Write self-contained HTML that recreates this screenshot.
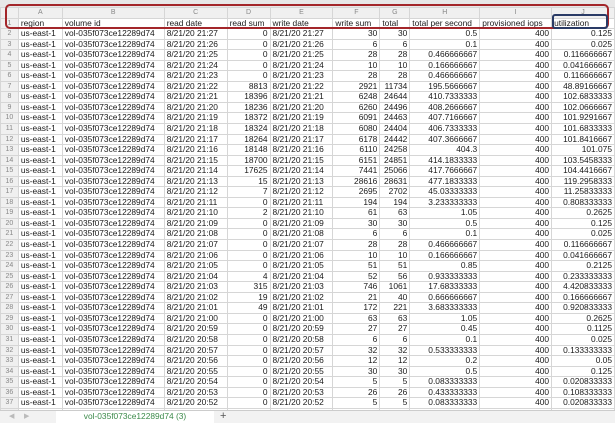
<!DOCTYPE html>
<html><head><meta charset="utf-8"><style>
body{margin:0;width:615px;height:422px;overflow:hidden;background:#fff;font-family:"Liberation Sans",sans-serif;position:relative}
#top{position:absolute;left:0;top:0;width:615px;height:7px;background:#e8e8e8}
#grid{position:absolute;left:0;top:7px;width:615px;height:403px;overflow:hidden}
table{border-collapse:collapse;table-layout:fixed;font-size:8.4px;color:#1a1a1a}
td{border:1px solid #d6d6d6;height:9.55px;padding:0 2px;white-space:nowrap;overflow:hidden;line-height:9.55px}
tr.h td{background:#f0f0f0;color:#888;text-align:center;font-size:7px;height:9px}
td.n{background:#f0f0f0;color:#888;text-align:center;padding:0;font-size:7px}
td.r{text-align:right}
#tabs{position:absolute;left:0;top:410px;width:615px;height:12px;background:#f2f2f2;border-top:1px solid #ccc}
#tab{position:absolute;left:56px;top:0;width:158px;height:12px;background:#fff;color:#3c8a4a;font-size:8.4px;line-height:11px;text-align:center}
.box1{position:absolute;left:5px;top:4px;width:604px;height:25px;border:2px solid #a3262a;border-radius:5px;box-sizing:border-box}
.box2{position:absolute;left:552px;top:14px;width:56px;height:15px;border:2px solid #2a3b66;border-radius:3px;box-sizing:border-box}
</style></head><body>
<div id="top"></div>
<div id="grid"><table>
<colgroup><col style="width:18px"><col style="width:44px"><col style="width:102px"><col style="width:63px"><col style="width:43px"><col style="width:63px"><col style="width:47px"><col style="width:30px"><col style="width:70px"><col style="width:72px"><col style="width:63px"></colgroup>
<tr class="h"><td></td><td>A</td><td>B</td><td>C</td><td>D</td><td>E</td><td>F</td><td>G</td><td>H</td><td>I</td><td>J</td></tr>
<tr><td class="n">1</td><td>region</td><td>volume id</td><td>read date</td><td>read sum</td><td>write date</td><td>write sum</td><td>total</td><td>total per second</td><td>provisioned iops</td><td>utilization</td></tr>
<tr><td class="n">2</td><td>us-east-1</td><td>vol-035f073ce12289d74</td><td>8/21/20 21:27</td><td class="r">0</td><td>8/21/20 21:27</td><td class="r">30</td><td class="r">30</td><td class="r">0.5</td><td class="r">400</td><td class="r">0.125</td></tr>
<tr><td class="n">3</td><td>us-east-1</td><td>vol-035f073ce12289d74</td><td>8/21/20 21:26</td><td class="r">0</td><td>8/21/20 21:26</td><td class="r">6</td><td class="r">6</td><td class="r">0.1</td><td class="r">400</td><td class="r">0.025</td></tr>
<tr><td class="n">4</td><td>us-east-1</td><td>vol-035f073ce12289d74</td><td>8/21/20 21:25</td><td class="r">0</td><td>8/21/20 21:25</td><td class="r">28</td><td class="r">28</td><td class="r">0.466666667</td><td class="r">400</td><td class="r">0.116666667</td></tr>
<tr><td class="n">5</td><td>us-east-1</td><td>vol-035f073ce12289d74</td><td>8/21/20 21:24</td><td class="r">0</td><td>8/21/20 21:24</td><td class="r">10</td><td class="r">10</td><td class="r">0.166666667</td><td class="r">400</td><td class="r">0.041666667</td></tr>
<tr><td class="n">6</td><td>us-east-1</td><td>vol-035f073ce12289d74</td><td>8/21/20 21:23</td><td class="r">0</td><td>8/21/20 21:23</td><td class="r">28</td><td class="r">28</td><td class="r">0.466666667</td><td class="r">400</td><td class="r">0.116666667</td></tr>
<tr><td class="n">7</td><td>us-east-1</td><td>vol-035f073ce12289d74</td><td>8/21/20 21:22</td><td class="r">8813</td><td>8/21/20 21:22</td><td class="r">2921</td><td class="r">11734</td><td class="r">195.5666667</td><td class="r">400</td><td class="r">48.89166667</td></tr>
<tr><td class="n">8</td><td>us-east-1</td><td>vol-035f073ce12289d74</td><td>8/21/20 21:21</td><td class="r">18396</td><td>8/21/20 21:21</td><td class="r">6248</td><td class="r">24644</td><td class="r">410.7333333</td><td class="r">400</td><td class="r">102.6833333</td></tr>
<tr><td class="n">9</td><td>us-east-1</td><td>vol-035f073ce12289d74</td><td>8/21/20 21:20</td><td class="r">18236</td><td>8/21/20 21:20</td><td class="r">6260</td><td class="r">24496</td><td class="r">408.2666667</td><td class="r">400</td><td class="r">102.0666667</td></tr>
<tr><td class="n">10</td><td>us-east-1</td><td>vol-035f073ce12289d74</td><td>8/21/20 21:19</td><td class="r">18372</td><td>8/21/20 21:19</td><td class="r">6091</td><td class="r">24463</td><td class="r">407.7166667</td><td class="r">400</td><td class="r">101.9291667</td></tr>
<tr><td class="n">11</td><td>us-east-1</td><td>vol-035f073ce12289d74</td><td>8/21/20 21:18</td><td class="r">18324</td><td>8/21/20 21:18</td><td class="r">6080</td><td class="r">24404</td><td class="r">406.7333333</td><td class="r">400</td><td class="r">101.6833333</td></tr>
<tr><td class="n">12</td><td>us-east-1</td><td>vol-035f073ce12289d74</td><td>8/21/20 21:17</td><td class="r">18264</td><td>8/21/20 21:17</td><td class="r">6178</td><td class="r">24442</td><td class="r">407.3666667</td><td class="r">400</td><td class="r">101.8416667</td></tr>
<tr><td class="n">13</td><td>us-east-1</td><td>vol-035f073ce12289d74</td><td>8/21/20 21:16</td><td class="r">18148</td><td>8/21/20 21:16</td><td class="r">6110</td><td class="r">24258</td><td class="r">404.3</td><td class="r">400</td><td class="r">101.075</td></tr>
<tr><td class="n">14</td><td>us-east-1</td><td>vol-035f073ce12289d74</td><td>8/21/20 21:15</td><td class="r">18700</td><td>8/21/20 21:15</td><td class="r">6151</td><td class="r">24851</td><td class="r">414.1833333</td><td class="r">400</td><td class="r">103.5458333</td></tr>
<tr><td class="n">15</td><td>us-east-1</td><td>vol-035f073ce12289d74</td><td>8/21/20 21:14</td><td class="r">17625</td><td>8/21/20 21:14</td><td class="r">7441</td><td class="r">25066</td><td class="r">417.7666667</td><td class="r">400</td><td class="r">104.4416667</td></tr>
<tr><td class="n">16</td><td>us-east-1</td><td>vol-035f073ce12289d74</td><td>8/21/20 21:13</td><td class="r">15</td><td>8/21/20 21:13</td><td class="r">28616</td><td class="r">28631</td><td class="r">477.1833333</td><td class="r">400</td><td class="r">119.2958333</td></tr>
<tr><td class="n">17</td><td>us-east-1</td><td>vol-035f073ce12289d74</td><td>8/21/20 21:12</td><td class="r">7</td><td>8/21/20 21:12</td><td class="r">2695</td><td class="r">2702</td><td class="r">45.03333333</td><td class="r">400</td><td class="r">11.25833333</td></tr>
<tr><td class="n">18</td><td>us-east-1</td><td>vol-035f073ce12289d74</td><td>8/21/20 21:11</td><td class="r">0</td><td>8/21/20 21:11</td><td class="r">194</td><td class="r">194</td><td class="r">3.233333333</td><td class="r">400</td><td class="r">0.808333333</td></tr>
<tr><td class="n">19</td><td>us-east-1</td><td>vol-035f073ce12289d74</td><td>8/21/20 21:10</td><td class="r">2</td><td>8/21/20 21:10</td><td class="r">61</td><td class="r">63</td><td class="r">1.05</td><td class="r">400</td><td class="r">0.2625</td></tr>
<tr><td class="n">20</td><td>us-east-1</td><td>vol-035f073ce12289d74</td><td>8/21/20 21:09</td><td class="r">0</td><td>8/21/20 21:09</td><td class="r">30</td><td class="r">30</td><td class="r">0.5</td><td class="r">400</td><td class="r">0.125</td></tr>
<tr><td class="n">21</td><td>us-east-1</td><td>vol-035f073ce12289d74</td><td>8/21/20 21:08</td><td class="r">0</td><td>8/21/20 21:08</td><td class="r">6</td><td class="r">6</td><td class="r">0.1</td><td class="r">400</td><td class="r">0.025</td></tr>
<tr><td class="n">22</td><td>us-east-1</td><td>vol-035f073ce12289d74</td><td>8/21/20 21:07</td><td class="r">0</td><td>8/21/20 21:07</td><td class="r">28</td><td class="r">28</td><td class="r">0.466666667</td><td class="r">400</td><td class="r">0.116666667</td></tr>
<tr><td class="n">23</td><td>us-east-1</td><td>vol-035f073ce12289d74</td><td>8/21/20 21:06</td><td class="r">0</td><td>8/21/20 21:06</td><td class="r">10</td><td class="r">10</td><td class="r">0.166666667</td><td class="r">400</td><td class="r">0.041666667</td></tr>
<tr><td class="n">24</td><td>us-east-1</td><td>vol-035f073ce12289d74</td><td>8/21/20 21:05</td><td class="r">0</td><td>8/21/20 21:05</td><td class="r">51</td><td class="r">51</td><td class="r">0.85</td><td class="r">400</td><td class="r">0.2125</td></tr>
<tr><td class="n">25</td><td>us-east-1</td><td>vol-035f073ce12289d74</td><td>8/21/20 21:04</td><td class="r">4</td><td>8/21/20 21:04</td><td class="r">52</td><td class="r">56</td><td class="r">0.933333333</td><td class="r">400</td><td class="r">0.233333333</td></tr>
<tr><td class="n">26</td><td>us-east-1</td><td>vol-035f073ce12289d74</td><td>8/21/20 21:03</td><td class="r">315</td><td>8/21/20 21:03</td><td class="r">746</td><td class="r">1061</td><td class="r">17.68333333</td><td class="r">400</td><td class="r">4.420833333</td></tr>
<tr><td class="n">27</td><td>us-east-1</td><td>vol-035f073ce12289d74</td><td>8/21/20 21:02</td><td class="r">19</td><td>8/21/20 21:02</td><td class="r">21</td><td class="r">40</td><td class="r">0.666666667</td><td class="r">400</td><td class="r">0.166666667</td></tr>
<tr><td class="n">28</td><td>us-east-1</td><td>vol-035f073ce12289d74</td><td>8/21/20 21:01</td><td class="r">49</td><td>8/21/20 21:01</td><td class="r">172</td><td class="r">221</td><td class="r">3.683333333</td><td class="r">400</td><td class="r">0.920833333</td></tr>
<tr><td class="n">29</td><td>us-east-1</td><td>vol-035f073ce12289d74</td><td>8/21/20 21:00</td><td class="r">0</td><td>8/21/20 21:00</td><td class="r">63</td><td class="r">63</td><td class="r">1.05</td><td class="r">400</td><td class="r">0.2625</td></tr>
<tr><td class="n">30</td><td>us-east-1</td><td>vol-035f073ce12289d74</td><td>8/21/20 20:59</td><td class="r">0</td><td>8/21/20 20:59</td><td class="r">27</td><td class="r">27</td><td class="r">0.45</td><td class="r">400</td><td class="r">0.1125</td></tr>
<tr><td class="n">31</td><td>us-east-1</td><td>vol-035f073ce12289d74</td><td>8/21/20 20:58</td><td class="r">0</td><td>8/21/20 20:58</td><td class="r">6</td><td class="r">6</td><td class="r">0.1</td><td class="r">400</td><td class="r">0.025</td></tr>
<tr><td class="n">32</td><td>us-east-1</td><td>vol-035f073ce12289d74</td><td>8/21/20 20:57</td><td class="r">0</td><td>8/21/20 20:57</td><td class="r">32</td><td class="r">32</td><td class="r">0.533333333</td><td class="r">400</td><td class="r">0.133333333</td></tr>
<tr><td class="n">33</td><td>us-east-1</td><td>vol-035f073ce12289d74</td><td>8/21/20 20:56</td><td class="r">0</td><td>8/21/20 20:56</td><td class="r">12</td><td class="r">12</td><td class="r">0.2</td><td class="r">400</td><td class="r">0.05</td></tr>
<tr><td class="n">34</td><td>us-east-1</td><td>vol-035f073ce12289d74</td><td>8/21/20 20:55</td><td class="r">0</td><td>8/21/20 20:55</td><td class="r">30</td><td class="r">30</td><td class="r">0.5</td><td class="r">400</td><td class="r">0.125</td></tr>
<tr><td class="n">35</td><td>us-east-1</td><td>vol-035f073ce12289d74</td><td>8/21/20 20:54</td><td class="r">0</td><td>8/21/20 20:54</td><td class="r">5</td><td class="r">5</td><td class="r">0.083333333</td><td class="r">400</td><td class="r">0.020833333</td></tr>
<tr><td class="n">36</td><td>us-east-1</td><td>vol-035f073ce12289d74</td><td>8/21/20 20:53</td><td class="r">0</td><td>8/21/20 20:53</td><td class="r">26</td><td class="r">26</td><td class="r">0.433333333</td><td class="r">400</td><td class="r">0.108333333</td></tr>
<tr><td class="n">37</td><td>us-east-1</td><td>vol-035f073ce12289d74</td><td>8/21/20 20:52</td><td class="r">0</td><td>8/21/20 20:52</td><td class="r">5</td><td class="r">5</td><td class="r">0.083333333</td><td class="r">400</td><td class="r">0.020833333</td></tr>
<tr><td class="n">38</td><td>us-east-1</td><td>vol-035f073ce12289d74</td><td>8/21/20 20:51</td><td class="r">0</td><td>8/21/20 20:51</td><td class="r">34</td><td class="r">34</td><td class="r">0.566666667</td><td class="r">400</td><td class="r">0.141666667</td></tr>
</table></div>
<div class="box1"></div><div class="box2"></div>
<div id="tabs">
<span style="position:absolute;left:9px;top:1px;font-size:7px;color:#bbb">◀</span>
<span style="position:absolute;left:24px;top:1px;font-size:7px;color:#bbb">▶</span>
<div id="tab">vol-035f073ce12289d74 (3)</div>
<span style="position:absolute;left:220px;top:-1px;font-size:11px;color:#555">+</span>
</div>
</body></html>
